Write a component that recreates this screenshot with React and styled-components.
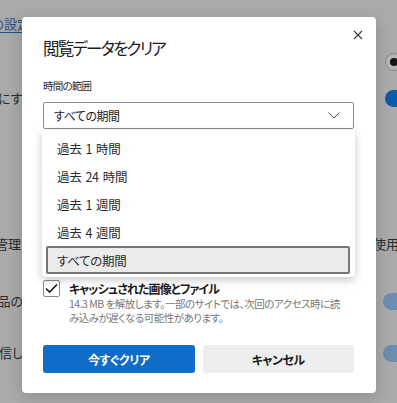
import React from 'react';
import styled, { createGlobalStyle } from 'styled-components';

const GlobalStyle = createGlobalStyle`
  html, body {
    margin: 0;
    padding: 0;
    background: #aaaaaa;
  }
  body {
    font-family: "Noto Sans CJK JP", "Noto Sans", sans-serif;
    font-feature-settings: "palt";
    color: #1b1b1b;
  }
`;

const Page = styled.div`
  position: relative;
  width: 397px;
  height: 403px;
  overflow: hidden;
  background: #aaaaaa;
`;

const Backdrop = styled.div`
  display: flex;
  flex-direction: column;
`;

const BgRow = styled.div`
  height: ${p => p.h}px;
  display: flex;
  align-items: center;
  justify-content: space-between;
`;

const BgLeft = styled.div`
  width: ${p => p.end}px;
  display: flex;
  justify-content: flex-end;
  white-space: nowrap;
  font-size: 13px;
  line-height: 18px;
  color: ${p => (p.link ? '#21507f' : '#2a2a2a')};
  text-decoration: ${p => (p.link ? 'underline' : 'none')};
  text-underline-offset: 3px;
`;

const BgRight = styled.div`
  width: ${p => p.w}px;
  margin-left: auto;
  display: flex;
  white-space: nowrap;
  font-size: 13px;
  line-height: 18px;
  color: #2a2a2a;
`;

const Radio = styled.div`
  width: 16px;
  height: 16px;
  flex: none;
  border-radius: 50%;
  border: 1px solid #8a8a8a;
  background: #b5b5b5;
  display: flex;
  align-items: center;
  justify-content: center;
  &::after {
    content: '';
    width: 8px;
    height: 8px;
    border-radius: 50%;
    background: #151515;
  }
`;

const Toggle = styled.div`
  width: 36px;
  height: 17px;
  flex: none;
  border-radius: 9px;
  background: ${p => (p.dim ? '#6c8db0' : '#0b5aab')};
`;

const Dialog = styled.div`
  position: absolute;
  left: 22px;
  top: 17px;
  width: 354px;
  box-sizing: border-box;
  padding: 17px 22px 20px 21px;
  background: #ffffff;
  border-radius: 4px;
  box-shadow: 0 4px 16px rgba(0, 0, 0, 0.18);
  display: flex;
  flex-direction: column;
`;

const CloseButton = styled.button`
  position: absolute;
  top: 8px;
  right: 8px;
  width: 20px;
  height: 20px;
  padding: 0;
  border: none;
  background: transparent;
  display: flex;
  align-items: center;
  justify-content: center;
`;

const Title = styled.h2`
  margin: 0;
  font-size: 16.5px;
  letter-spacing: -1.8px;
  line-height: 28px;
  font-weight: 400;
  color: #1b1b1b;
`;

const FieldLabel = styled.div`
  margin-top: 16px;
  font-size: 10.5px;
  letter-spacing: -0.8px;
  line-height: 16px;
  color: #2b2b2b;
`;

const SelectWrap = styled.div`
  position: relative;
  margin-top: 8px;
`;

const SelectBox = styled.div`
  height: 27px;
  box-sizing: border-box;
  border: 1px solid #8d8d8d;
  border-radius: 2px;
  display: flex;
  align-items: center;
  justify-content: space-between;
  padding: 0 13px 0 10px;
  font-size: 12px;
  letter-spacing: -0.5px;
  color: #1b1b1b;
`;

const Popup = styled.ul`
  position: absolute;
  z-index: 2;
  top: calc(100% + 1px);
  left: -1px;
  width: 313px;
  box-sizing: border-box;
  margin: 0;
  padding: 4px 5px 3px 4px;
  list-style: none;
  background: #ffffff;
  border-radius: 4px;
  box-shadow: 0 3px 10px rgba(0, 0, 0, 0.22);
`;

const Option = styled.li`
  height: 28px;
  box-sizing: border-box;
  display: flex;
  align-items: center;
  padding-left: ${p => (p.active ? 9 : 11)}px;
  font-size: 12.5px;
  letter-spacing: -0.3px;
  word-spacing: 1.5px;
  color: #2b2b2b;
  border-radius: 2px;
  background: ${p => (p.active ? '#ebebeb' : 'transparent')};
  border: ${p => (p.active ? '2px solid #767676' : 'none')};
`;

const CheckList = styled.div`
  margin-top: 8px;
  height: 188px;
  display: flex;
  flex-direction: column;
  justify-content: flex-end;
`;

const CheckRow = styled.div`
  display: flex;
  gap: 9px;
`;

const CheckBox = styled.div`
  width: 17px;
  height: 17px;
  flex: none;
  box-sizing: border-box;
  border: 1px solid #8a8a8a;
  border-radius: 2px;
  display: flex;
  align-items: center;
  justify-content: center;
`;

const CheckText = styled.div`
  display: flex;
  flex-direction: column;
`;

const CheckLabel = styled.div`
  font-size: 12px;
  letter-spacing: -0.9px;
  line-height: 17px;
  font-weight: 700;
  color: #1b1b1b;
`;

const CheckDesc = styled.div`
  font-size: 10.5px;
  letter-spacing: -0.5px;
  line-height: 14px;
  color: #777777;
  white-space: nowrap;
`;

const Actions = styled.div`
  margin-top: 20px;
  display: grid;
  grid-template-columns: 1fr 1fr;
  gap: 8px;
`;

const Button = styled.button`
  height: 28px;
  border: none;
  border-radius: 3px;
  font-family: inherit;
  font-feature-settings: "palt";
  font-size: 12px;
  letter-spacing: -0.5px;
  font-weight: 700;
  background: ${p => (p.primary ? '#0f6cc7' : '#eeeeee')};
  color: ${p => (p.primary ? '#ffffff' : '#1b1b1b')};
`;

const Check = () => (
  <svg width="13" height="11" viewBox="0 0 13 11">
    <polyline points="1,5.5 4.6,9 12,1.5" fill="none" stroke="#1b1b1b" strokeWidth="1.6" />
  </svg>
);

const options = ['過去 1 時間', '過去 24 時間', '過去 1 週間', '過去 4 週間', 'すべての期間'];

export default function App() {
  return (
    <Page>
      <GlobalStyle />
      <Backdrop>
        <BgRow h={48}>
          <BgLeft end={30} link>ブラウザーの設定</BgLeft>
        </BgRow>
        <BgRow h={28}>
          <BgRight w={12}><Radio /></BgRight>
        </BgRow>
        <BgRow h={44}>
          <BgLeft end={34}>有効にする</BgLeft>
          <BgRight w={12}><Toggle /></BgRight>
        </BgRow>
        <BgRow h={110} />
        <BgRow h={28}>
          <BgLeft end={21}>サイトの権限の管理</BgLeft>
          <BgRight w={24}>使用されるデータ</BgRight>
        </BgRow>
        <BgRow h={86}>
          <BgLeft end={23}>製品の</BgLeft>
          <BgRight w={14}><Toggle dim /></BgRight>
        </BgRow>
        <BgRow h={18}>
          <BgLeft end={23}>送信し</BgLeft>
          <BgRight w={14}><Toggle dim /></BgRight>
        </BgRow>
      </Backdrop>

      <Dialog>
        <CloseButton aria-label="閉じる">
          <svg width="10" height="10" viewBox="0 0 10 10">
            <path d="M1 1 L9 9 M9 1 L1 9" stroke="#3a3a3a" strokeWidth="1.1" />
          </svg>
        </CloseButton>
        <Title>閲覧データをクリア</Title>
        <FieldLabel>時間の範囲</FieldLabel>
        <SelectWrap>
          <SelectBox>
            <span>すべての期間</span>
            <svg width="12" height="7" viewBox="0 0 12 7">
              <polyline points="0.5,0.5 6,6 11.5,0.5" fill="none" stroke="#555" strokeWidth="1" />
            </svg>
          </SelectBox>
          <Popup>
            {options.map((o, i) => (
              <Option key={o} active={i === options.length - 1}>{o}</Option>
            ))}
          </Popup>
        </SelectWrap>
        <CheckList>
          <CheckRow>
            <CheckBox><Check /></CheckBox>
            <CheckText>
              <CheckLabel>キャッシュされた画像とファイル</CheckLabel>
              <CheckDesc>
                14.3 MB を解放します。一部のサイトでは、次回のアクセス時に読
                <br />
                み込みが遅くなる可能性があります。
              </CheckDesc>
            </CheckText>
          </CheckRow>
        </CheckList>
        <Actions>
          <Button primary>今すぐクリア</Button>
          <Button>キャンセル</Button>
        </Actions>
      </Dialog>
    </Page>
  );
}
